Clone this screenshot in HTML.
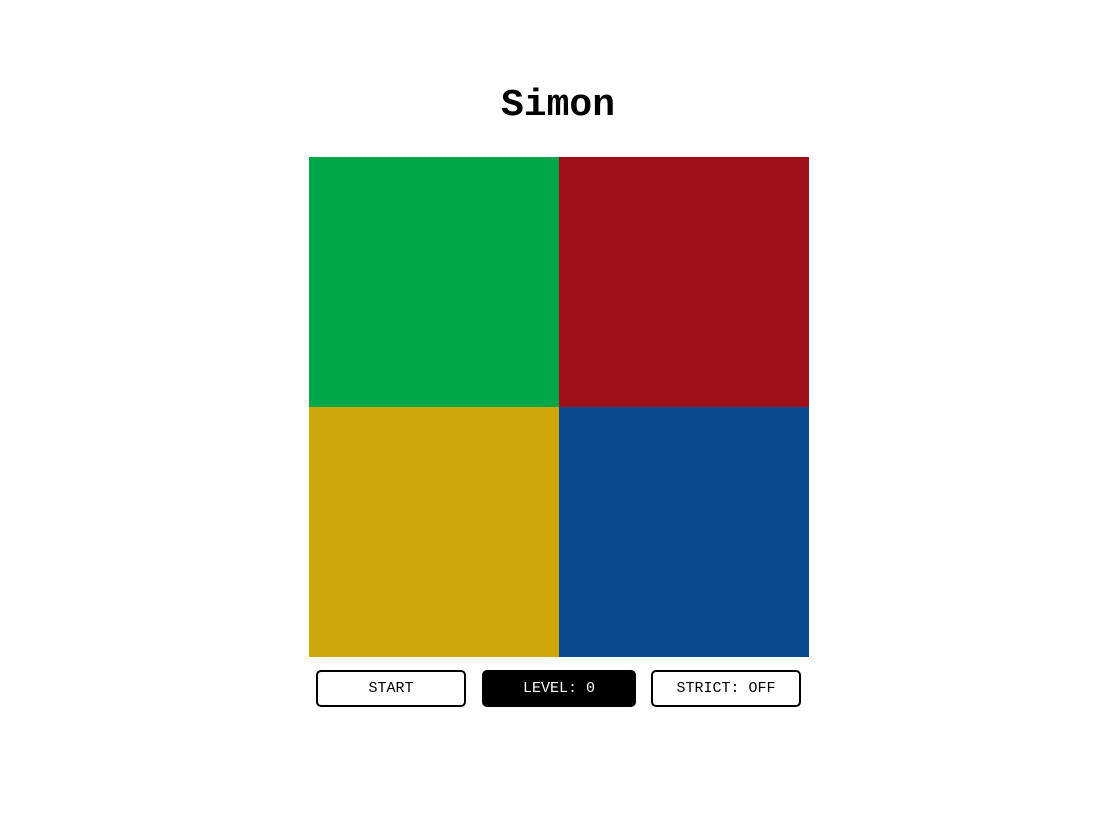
<!DOCTYPE html>
<html><head><style>
body{margin:0;background:#fff;width:1116px;height:831px;position:relative;font-family:"Liberation Mono",monospace}
h1{position:absolute;top:84px;left:0;width:1116px;margin:0;text-align:center;font-size:38px;line-height:44px;font-weight:bold}
.q{position:absolute;width:250px;height:250px}
.b{position:absolute;top:670px;height:37px;box-sizing:border-box;border:2px solid #000;border-radius:5px;text-align:center;line-height:33px;font-size:15px;background:#fff;color:#000}
</style></head><body>
<h1>Simon</h1>
<div class="q" style="left:309px;top:157px;background:#00a74a"></div>
<div class="q" style="left:559px;top:157px;background:#9f0f1a"></div>
<div class="q" style="left:309px;top:407px;background:#cea709"></div>
<div class="q" style="left:559px;top:407px;background:#094a8f"></div>
<div class="b" style="left:316px;width:150px">START</div>
<div class="b" style="left:482px;width:154px;background:#000;color:#fff">LEVEL: 0</div>
<div class="b" style="left:651px;width:150px">STRICT: OFF</div>
</body></html>
